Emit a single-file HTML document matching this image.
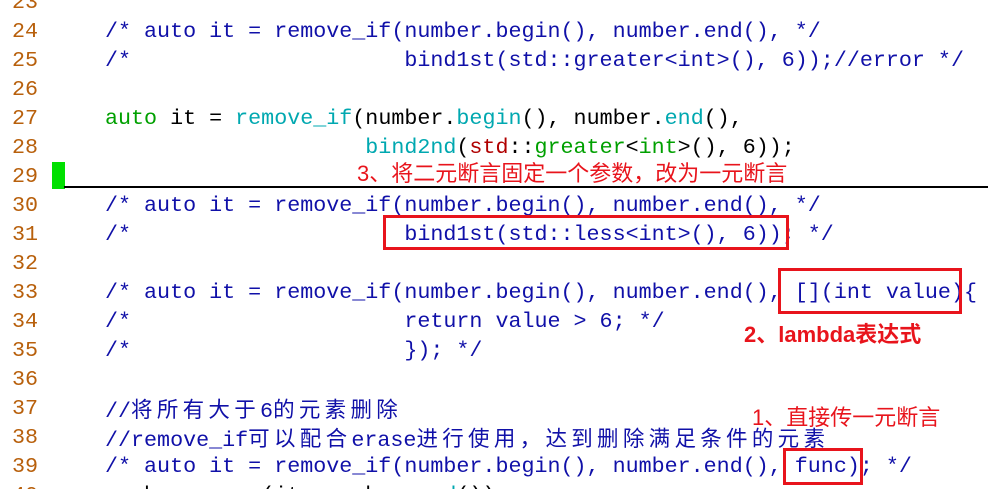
<!DOCTYPE html>
<html><head><meta charset="utf-8"><style>
html,body{margin:0;width:998px;height:489px;overflow:hidden}
body{background:#fff;position:relative;font-family:"Liberation Mono","Noto Sans CJK SC",monospace;font-size:21.7px}
.l{position:absolute;left:0;height:29px;line-height:29px;white-space:pre;width:998px}
.n{position:absolute;left:12px;color:#b8600c}
.c{position:absolute;left:105px}
.cm{color:#1010a8}
.g{color:#00a000}.t{color:#00a8b0}.r{color:#b00000}.k{color:#000}
.z{letter-spacing:4.3px;font-family:"Noto Sans CJK SC",sans-serif;font-size:21.5px}
.box{position:absolute;border:3px solid #e8141c;box-sizing:border-box}
.a{position:absolute;color:#e8141c;font-family:"Liberation Sans","Noto Sans CJK SC",sans-serif;font-size:22px;white-space:nowrap}
</style></head><body>
<div class="l" style="top:-12px"><span class="n">23</span></div>
<div class="l" style="top:17px"><span class="n">24</span><span class="c cm">/* auto it = remove_if(number.begin(), number.end(), */</span></div>
<div class="l" style="top:46px"><span class="n">25</span><span class="c cm">/*                     bind1st(std::greater&lt;int&gt;(), 6));//error */</span></div>
<div class="l" style="top:75px"><span class="n">26</span></div>
<div class="l" style="top:104px"><span class="n">27</span><span class="c"><span class="g">auto</span> it = <span class="t">remove_if</span>(number.<span class="t">begin</span>(), number.<span class="t">end</span>(),</span></div>
<div class="l" style="top:133px"><span class="n">28</span><span class="c">                    <span class="t">bind2nd</span>(<span class="r">std</span>::<span class="g">greater</span>&lt;<span class="g">int</span>&gt;(), 6));</span></div>
<div class="l" style="top:162px"><span class="n">29</span></div>
<div style="position:absolute;left:52px;top:162px;width:13px;height:27px;background:#00e000"></div>
<div style="position:absolute;left:64px;top:186px;width:924px;height:2px;background:#000"></div>
<div class="l" style="top:191px"><span class="n">30</span><span class="c cm">/* auto it = remove_if(number.begin(), number.end(), */</span></div>
<div class="l" style="top:220px"><span class="n">31</span><span class="c cm">/*                     bind1st(std::less&lt;int&gt;(), 6)); */</span></div>
<div class="l" style="top:249px"><span class="n">32</span></div>
<div class="l" style="top:278px"><span class="n">33</span><span class="c cm">/* auto it = remove_if(number.begin(), number.end(), [](int value){</span></div>
<div class="l" style="top:307px"><span class="n">34</span><span class="c cm">/*                     return value &gt; 6; */</span></div>
<div class="l" style="top:336px"><span class="n">35</span><span class="c cm">/*                     }); */</span></div>
<div class="l" style="top:365px"><span class="n">36</span></div>
<div class="l" style="top:394px"><span class="n">37</span><span class="c cm">//<span class="z">将所有大于</span>6<span class="z">的元素删除</span></span></div>
<div class="l" style="top:423px"><span class="n">38</span><span class="c cm">//remove_if<span class="z">可以配合</span>erase<span class="z">进行使用，达到删除满足条件的元素</span></span></div>
<div class="l" style="top:452px"><span class="n">39</span><span class="c cm">/* auto it = remove_if(number.begin(), number.end(), func); */</span></div>
<div class="l" style="top:481px"><span class="n">40</span><span class="c">number.<span class="t">erase</span>(it, number.<span class="t">end</span>());</span></div>
<div class="box" style="left:383px;top:215px;width:406px;height:35px"></div>
<div class="box" style="left:778px;top:268px;width:184px;height:46px"></div>
<div class="box" style="left:783px;top:448px;width:80px;height:37px"></div>
<div class="a" style="left:357px;top:156px">3、将二元断言固定一个参数，改为一元断言</div>
<div class="a" style="left:744px;top:317px;font-weight:bold">2、lambda表达式</div>
<div class="a" style="left:752px;top:400px">1、直接传一元断言</div>
</body></html>
